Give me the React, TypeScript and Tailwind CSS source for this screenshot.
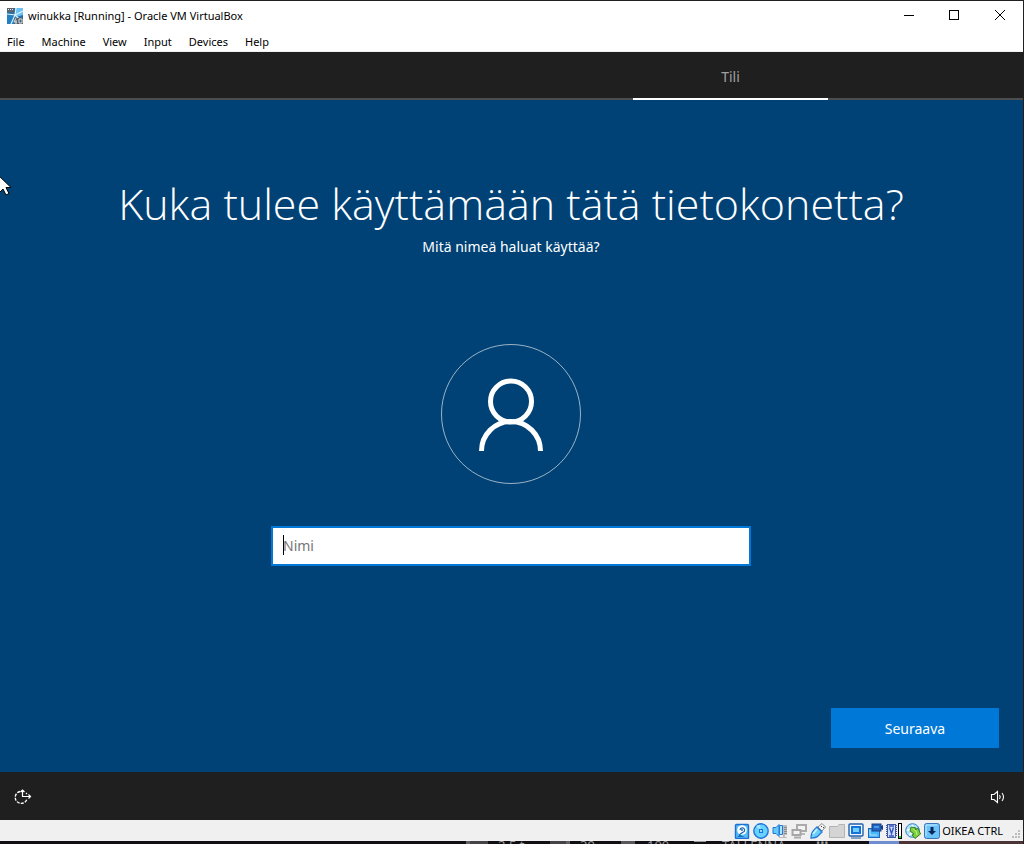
import React from "react";

const menus = ["File", "Machine", "View", "Input", "Devices", "Help"];

function AppIcon() {
  return (
    <svg width="16" height="16" viewBox="0 0 16 16" aria-hidden="true">
      <rect width="16" height="16" fill="#2f6d9e" />
      <path d="M8 0h8v7l-7 2z" fill="#6cc0f2" />
      <path d="M0 5l6 3 2 8H0z" fill="#2380c4" />
      <path d="M0 0h7v4H0z" fill="#59646e" />
      <path d="M9 0l-1 7 8-4M0 6l8 1-4 9M8 7l4 4" stroke="#d8f0fd" strokeWidth="1.2" fill="none" />
      <path d="M7 10h9v6H7z" fill="#52606b" />
      <path d="M9 10l-2 4h3m-1-2v4M12 11h3v4h-3z" stroke="#d5dde3" fill="none" />
      <path d="M1 1.5h1m1 0h1m1 0h1" stroke="#e6edf2" />
    </svg>
  );
}

function HardDisk() {
  return (
    <svg width="16" height="16" viewBox="0 0 16 16" aria-hidden="true">
      <rect x="1.5" y="1.5" width="13" height="14" rx="1" fill="#55bff8" stroke="#1d6fd0" strokeWidth="1.4" />
      <circle cx="8" cy="7" r="4.8" fill="#fff" />
      <path d="M6 7a2.3 2.3 0 1 1 3 2.3c-1 .6-2 .7-4 3" fill="none" stroke="#1769bb" strokeWidth="1.2" />
      <circle cx="8" cy="7" r="1" fill="#1769bb" />
      <path d="M3 14l3-2 5 2z" fill="#1769bb" />
    </svg>
  );
}

function Disc() {
  return (
    <svg width="16" height="16" viewBox="0 0 16 16" aria-hidden="true">
      <circle cx="8" cy="8" r="7.2" fill="#69d2fc" stroke="#1d74d8" strokeWidth="1.4" />
      <path d="M8 8L3 3a7 7 0 0 1 4-1z" fill="#a8e8ff" />
      <rect x="6.5" y="6.5" width="3" height="3" fill="#8be0ff" stroke="#1d74d8" />
    </svg>
  );
}

function Audio() {
  return (
    <svg width="16" height="16" viewBox="0 0 16 16" aria-hidden="true">
      <path d="M10 2h5v10h-2v2h2v1H7v-1h4V2" fill="#bcbcbc" />
      <path d="M12 4.5h3m-3 2h3m-3 2h3m-3 2h3" stroke="#8c8c8c" />
      <path d="M1 4.5h3l3-3v12l-3-3H1z" fill="#63cafb" stroke="#2478d4" />
      <path d="M7.5 2.5h3v9h-3z" fill="#a5e5ff" stroke="#2478d4" />
    </svg>
  );
}

function Network() {
  return (
    <svg width="16" height="16" viewBox="0 0 16 16" aria-hidden="true">
      <rect x="6" y="2" width="9" height="6" fill="#f2f2f2" stroke="#ababab" strokeWidth="2" />
      <path d="M8 11h6" stroke="#b8b8b8" strokeWidth="2" />
      <rect x="1.5" y="7" width="8" height="5" fill="#f2f2f2" stroke="#a6a6a6" strokeWidth="2" />
      <path d="M3 14.5h7" stroke="#aaa" strokeWidth="2" />
    </svg>
  );
}

function Usb() {
  return (
    <svg width="16" height="16" viewBox="0 0 16 16" aria-hidden="true">
      <path d="M8 4l4-3.5L15.5 4 12 8z" fill="#f4f4f4" stroke="#888" />
      <path d="M11 3h1v1h-1zM13 4h1v1h-1z" fill="#444" />
      <path d="M7 4l5 5-4 4c-2 2-5 2-7 2 0-3 1-6 3-8z" fill="#6bcffc" stroke="#2478d4" strokeWidth="1.3" />
      <path d="M7 6L3 11" stroke="#c5f1ff" strokeWidth="2" />
    </svg>
  );
}

function Folder() {
  return (
    <svg width="16" height="16" viewBox="0 0 16 16" aria-hidden="true">
      <path d="M.5 3.5h8l1.5-2h5.5v13H.5z" fill="#d4d4d4" stroke="#b3b3b3" />
    </svg>
  );
}

function Screen() {
  return (
    <svg width="16" height="16" viewBox="0 0 16 16" aria-hidden="true">
      <rect x="1" y="1" width="14" height="12" rx="1" fill="#edf7ff" stroke="#245fa9" strokeWidth="1.4" />
      <rect x="4" y="4" width="8" height="6" fill="#6fd0ff" stroke="#1673d8" strokeWidth="2" />
      <path d="M3 15h10" stroke="#5a83b0" strokeWidth="1.4" />
    </svg>
  );
}

function Recording() {
  return (
    <svg width="16" height="16" viewBox="0 0 16 16" aria-hidden="true">
      <rect x="1.5" y="5.5" width="11" height="9" fill="#49b6fa" stroke="#2068bf" />
      <rect x="5" y="1" width="9" height="7" fill="#2364c1" stroke="#153d86" />
      <path d="M14 3l2-1v5l-2-1z" fill="#153d86" />
      <path d="M7 3h5v2H7z" fill="#4a9aec" />
      <path d="M3 7v5h7" stroke="#a7e6ff" fill="none" />
    </svg>
  );
}

function Processor() {
  return (
    <svg width="16" height="16" viewBox="0 0 16 16" aria-hidden="true">
      <path d="M.5 2v12M10.5 2v12" stroke="#3e56a1" strokeDasharray="1 1" />
      <rect x="1.5" y="1.5" width="8" height="13" fill="#cfdcff" stroke="#3e56a1" />
      <path d="M3.5 4.5l2 6 2-6M3 3h5M3 13h5" fill="none" stroke="#3558b8" strokeWidth="1.4" />
      <rect x="12" width="4" height="16" fill="#000" />
      <rect x="13" y="1" width="2" height="12" fill="#fff" />
      <rect x="13" y="13" width="2" height="2" fill="#10e020" />
    </svg>
  );
}

function Mouse() {
  return (
    <svg width="16" height="16" viewBox="0 0 16 16" aria-hidden="true">
      <circle cx="7.5" cy="7.5" r="6.8" fill="#a9e1f8" stroke="#2f7fc4" />
      <path d="M2 7h3l3-5m-4 10l3-2" stroke="#f2fbff" strokeWidth="2" fill="none" />
      <path d="M6 4l5 1-1 2 3-2 2.5 6-5.5 4.5L7 12l2-1-4-3z" fill="#7bd03a" stroke="#367b2b" />
      <path d="M8 6l3 2 1 4" stroke="#c5f47c" fill="none" />
    </svg>
  );
}

function Keyboard() {
  return (
    <svg width="16" height="16" viewBox="0 0 16 16" aria-hidden="true">
      <rect x=".5" y=".5" width="15" height="15" rx="2" fill="#6cc3fa" stroke="#3975ba" />
      <path d="M2 13V2h11" stroke="#c3eaff" fill="none" />
      <path d="M6.5 4h3v4H12l-4 4-4-4h2.5z" fill="#08285c" />
    </svg>
  );
}

const indicators = [
  { label: "Hard disks", Icon: HardDisk },
  { label: "Optical drives", Icon: Disc },
  { label: "Audio", Icon: Audio },
  { label: "Network", Icon: Network },
  { label: "USB", Icon: Usb },
  { label: "Shared folders", Icon: Folder },
  { label: "Display", Icon: Screen },
  { label: "Recording", Icon: Recording },
  { label: "Processor", Icon: Processor },
  { label: "Mouse integration", Icon: Mouse },
  { label: "Keyboard", Icon: Keyboard },
];

function TitleBar() {
  return (
    <header className="flex h-[30px] shrink-0 items-center justify-between bg-white pl-[7px]">
      <div className="flex items-center gap-[5px]">
        <AppIcon />
        <span className="text-[11px] leading-4 text-black">winukka [Running] - Oracle VM VirtualBox</span>
      </div>
      <div className="flex h-full pb-[2px]">
        <button aria-label="Minimize" className="flex w-11 items-center justify-center pt-[2px]">
          <svg width="10" height="10" shapeRendering="crispEdges"><path d="M0 4.5h10" stroke="#000" /></svg>
        </button>
        <button aria-label="Maximize" className="flex w-[46px] items-center justify-center">
          <svg width="10" height="10" shapeRendering="crispEdges"><path d="M.5.5h9v9h-9z" stroke="#000" fill="none" /></svg>
        </button>
        <button aria-label="Close" className="flex w-[46px] items-center justify-center">
          <svg width="10" height="10"><path d="M0 0l10 10m0-10l-10 10" stroke="#000" /></svg>
        </button>
      </div>
    </header>
  );
}

function StatusBar() {
  return (
    <footer className="flex h-[21px] shrink-0 items-center justify-end bg-[#f0f0f0]">
      <div className="flex gap-[3px]">
        {indicators.map(({ label, Icon }) => (
          <button key={label} aria-label={label} className="h-4 w-4"><Icon /></button>
        ))}
      </div>
      <span className="ml-[2px] text-[11px] leading-4 whitespace-nowrap text-black">OIKEA CTRL</span>
      <svg className="mr-[2px] ml-2 mt-2" width="10" height="10" fill="#bdbdbd" aria-hidden="true">
        <path d="M7 0h2v2H7zM4 3h2v2H4zM7 3h2v2H7zM1 6h2v2H1zM4 6h2v2H4zM7 6h2v2H7z" />
      </svg>
    </footer>
  );
}

function DesktopEdge() {
  return (
    <div className="flex h-[3px] shrink-0 items-start overflow-hidden bg-[#120f14] pl-[466px] text-[13px] leading-[9px] text-[#999]" aria-hidden="true">
      <span className="h-[3px] w-[22px] border-l-4 border-[#626064] bg-[#454348]" />
      <span className="ml-[10px] w-[52px]">2,5 t</span>
      <span className="h-[3px] w-[20px] border-r-4 border-[#626064] bg-[#454348]" />
      <span className="ml-[10px] w-[41px]">39</span>
      <span className="h-[3px] w-[14px] bg-[#58565a]" />
      <span className="ml-[12px] w-[47px]">100</span>
      <span className="h-px w-[12px] bg-[#999]" />
      <span className="ml-[16px] w-[94px]">TALLENNA</span>
      <span className="text-[11px] leading-[3px]">•••</span>
      <span className="ml-auto h-[3px] w-[30px] bg-[#6f8dd0]" />
      <span className="h-[3px] w-[124px] bg-[#4b3336]" />
    </div>
  );
}

export default function App() {
  return (
    <div className="flex min-h-screen flex-col border-t border-r border-[#202020] bg-[#004275] font-['Noto_Sans','Open_Sans',sans-serif]">
      <TitleBar />
      <nav className="flex h-[21px] shrink-0 items-center gap-[17px] border-b border-[#f0f0f0] bg-white pt-[2px] pl-[7px] text-[11px] leading-4 text-black">
        {menus.map((item) => <button key={item}>{item}</button>)}
      </nav>
      <div className="flex h-12 shrink-0 justify-end border-b-2 border-[#4d4d4d] bg-[#1f1f1f] pr-[195px]">
        <button className="-mb-[2px] w-[195px] border-b-2 border-white pt-1 text-[14px] leading-5 text-[#a0a0a0]">Tili</button>
      </div>
      <main className="relative flex grow flex-col items-center bg-[#004275] pr-6 pb-6 pl-[23px] text-white">
        <svg className="absolute top-[75px] left-0" width="13" height="22" viewBox="0 0 13 22" aria-hidden="true">
          <path d="M-5-3L11 12.5H6l3 6-3 1.5-3-6-4 4z" fill="#fff" stroke="#000" />
        </svg>
        <h1 className="mt-[72px] text-center font-['Open_Sans','Noto_Sans',sans-serif] text-[43px] leading-[64px] font-light">Kuka tulee käyttämään tätä tietokonetta?</h1>
        <label htmlFor="name" className="pt-px text-[14px] leading-5">Mitä nimeä haluat käyttää?</label>
        <svg className="mt-[87px] shrink-0" width="140" height="140" viewBox="0 0 140 140" fill="none" stroke="#fff" aria-hidden="true">
          <circle cx="70" cy="70" r="69.5" strokeOpacity=".6" />
          <circle cx="70" cy="57.5" r="20.5" strokeWidth="5" />
          <path d="M40.5 107a29.5 29.5 0 0 1 59 0" strokeWidth="5" />
        </svg>
        <div className="relative mt-[42px] w-full max-w-[480px]">
          <input id="name" placeholder="Nimi" className="h-10 w-full border-2 border-[#0078d7] bg-white px-[10px] pb-[2px] text-[14px] leading-5 text-black outline-none placeholder:text-[#767676]" />
          <span className="absolute top-[9px] left-3 h-5 w-px bg-black" aria-hidden="true" />
        </div>
        <button className="mt-auto h-10 w-[168px] self-end bg-[#0078d7] pt-[2px] text-[14px] leading-5 text-white">Seuraava</button>
      </main>
      <div className="flex h-12 shrink-0 items-center justify-between bg-[#1f1f1f] pt-[2px] pr-[17px] pl-[14px]">
        <button aria-label="Ease of access">
          <svg width="18" height="16" viewBox="0 0 18 16" fill="none" stroke="#fff">
            <path d="M6 2.5A6 6 0 1 0 13 10" strokeWidth="1.3" strokeDasharray="3 1.2" />
            <path d="M8.5 1v6.5h8M6.5 3l2-2 2 2M14.5 5.5l2 2-2 2M12 4l1 1" strokeWidth="1.2" />
          </svg>
        </button>
        <button aria-label="Volume">
          <svg width="16" height="14" viewBox="0 0 16 14" fill="none" stroke="#fff" strokeWidth="1.1">
            <path d="M1.5 4.5H4L7.5 1.5v11L4 9.5H1.5zM9.5 5q1.5 2 0 4M12 3q3 4 0 8" />
          </svg>
        </button>
      </div>
      <StatusBar />
      <DesktopEdge />
    </div>
  );
}
